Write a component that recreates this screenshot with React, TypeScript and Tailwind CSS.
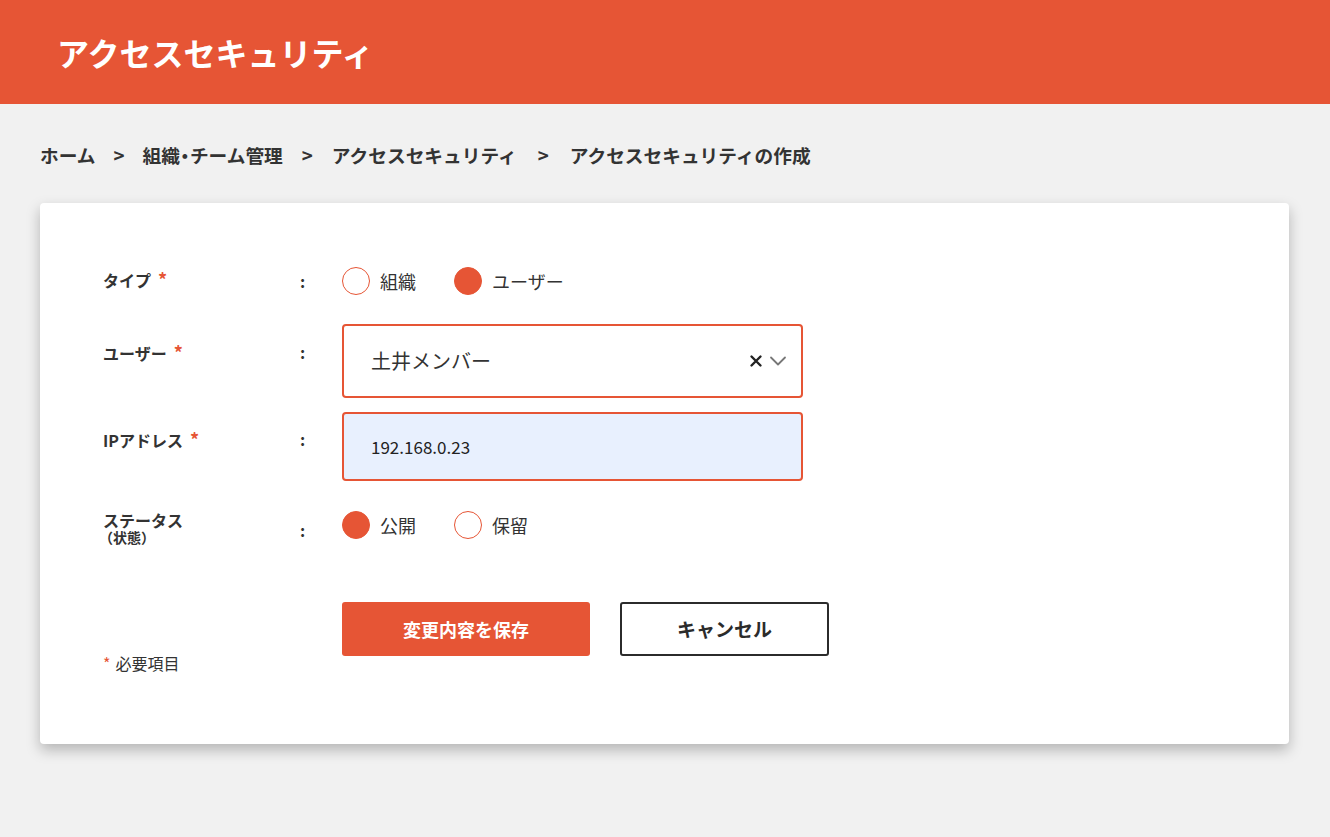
import React from "react";

function Radio({ checked, label }: { checked: boolean; label: string }) {
  return (
    <div className="flex items-center gap-[10px]">
      <span
        className={
          checked
            ? "w-[28px] h-[28px] rounded-full bg-[#e65535] border border-[#e65535]"
            : "w-[28px] h-[28px] rounded-full bg-white border border-[#e65535]"
        }
      />
      <span className="text-[18px] text-[#333] leading-[28px]">{label}</span>
    </div>
  );
}

function Label({ text }: { text: string }) {
  return (
    <span className="text-[16px] font-bold text-[#333] leading-[24px]">
      {text}
      <span className="text-[#e65535] ml-[7px] text-[18px] font-bold">*</span>
    </span>
  );
}

export default function App() {
  return (
    <div
      className="w-[1330px] h-[837px] bg-[#f1f1f1] overflow-hidden"
      style={{ fontFamily: '"Noto Sans CJK JP", "Noto Sans", sans-serif' }}
    >
      <header className="h-[104px] bg-[#e65535] flex items-center pl-[57px]">
        <h1 className="text-[32px] font-bold text-white leading-none">アクセスセキュリティ</h1>
      </header>

      <nav className="flex items-center pl-[40px] mt-[39px] h-[24px] text-[18.7px] font-bold text-[#333]">
        <span>ホーム</span>
        <span className="mx-[18px]">&gt;</span>
        <span className="flex items-center">
          <span>組織</span>
          <span className="inline-flex justify-center w-[10px] overflow-visible">・</span>
          <span>チーム管理</span>
        </span>
        <span className="mx-[19px]">&gt;</span>
        <span>アクセスセキュリティ</span>
        <span className="mx-[21px]">&gt;</span>
        <span>アクセスセキュリティの作成</span>
      </nav>

      <main className="mx-[40px] mt-[36px] w-[1249px] h-[541px] bg-white rounded-[4px] shadow-[0_6px_14px_rgba(0,0,0,0.25)] pl-[63px] pt-[58px]">
        {/* Type */}
        <div className="flex items-center h-[40px]">
          <div className="w-[197px] -mt-[4px]">
            <Label text="タイプ" />
          </div>
          <div className="w-[42px] font-bold text-[16px] text-[#333]">:</div>
          <div className="flex items-center gap-[38px]">
            <Radio checked={false} label="組織" />
            <Radio checked={true} label="ユーザー" />
          </div>
        </div>

        {/* User */}
        <div className="flex items-start mt-[23px]">
          <div className="w-[197px] pt-[16px]">
            <Label text="ユーザー" />
          </div>
          <div className="w-[42px] pt-[16px] font-bold text-[16px] leading-[24px] text-[#333]">:</div>
          <div className="w-[461px] h-[74px] border-2 border-[#e65535] rounded-[4px] flex items-center pl-[27px] pr-[14px]">
            <span className="flex-1 text-[20px] text-[#333]">土井メンバー</span>
            <svg width="14" height="14" viewBox="0 0 14 14" className="mr-[6px]">
              <path d="M2.5 2.5 L11.5 11.5 M11.5 2.5 L2.5 11.5" stroke="#222" strokeWidth="2.4" strokeLinecap="round" />
            </svg>
            <svg width="18" height="12" viewBox="0 0 18 12">
              <path d="M2 2.5 L9 9.5 L16 2.5" stroke="#777" strokeWidth="1.8" fill="none" strokeLinecap="round" strokeLinejoin="round" />
            </svg>
          </div>
        </div>

        {/* IP */}
        <div className="flex items-start mt-[14px]">
          <div className="w-[197px] pt-[15px]">
            <Label text="IPアドレス" />
          </div>
          <div className="w-[42px] pt-[15px] font-bold text-[16px] leading-[24px] text-[#333]">:</div>
          <div className="w-[461px] h-[69px] border-2 border-[#e65535] rounded-[4px] bg-[#e8f0fe] flex items-center pl-[27px]">
            <span className="text-[17px] text-[#222]">192.168.0.23</span>
          </div>
        </div>

        {/* Status */}
        <div className="flex items-center mt-[30px] h-[28px]">
          <div className="w-[197px] flex flex-col pt-[6px]">
            <span className="text-[16px] font-bold text-[#333] leading-[18px]">ステータス</span>
            <span className="text-[14px] font-bold text-[#333] leading-[17px] -ml-[4px]">（状態）</span>
          </div>
          <div className="w-[42px] font-bold text-[16px] text-[#333] pt-[10px]">:</div>
          <div className="flex items-center gap-[38px]">
            <Radio checked={true} label="公開" />
            <Radio checked={false} label="保留" />
          </div>
        </div>

        {/* Buttons */}
        <div className="flex items-start mt-[63px]">
          <div className="w-[239px] pt-[51px] text-[16px] leading-[20px] text-[#333]">
            <span className="text-[#e65535] mr-[5px]">*</span>必要項目
          </div>
          <button className="w-[248px] h-[54px] bg-[#e65535] rounded-[3px] text-white font-bold text-[18px]">
            変更内容を保存
          </button>
          <button className="ml-[30px] w-[209px] h-[54px] bg-white border-2 border-[#2b2b2b] rounded-[3px] text-[#2b2b2b] font-bold text-[19px]">
            キャンセル
          </button>
        </div>
      </main>
    </div>
  );
}
